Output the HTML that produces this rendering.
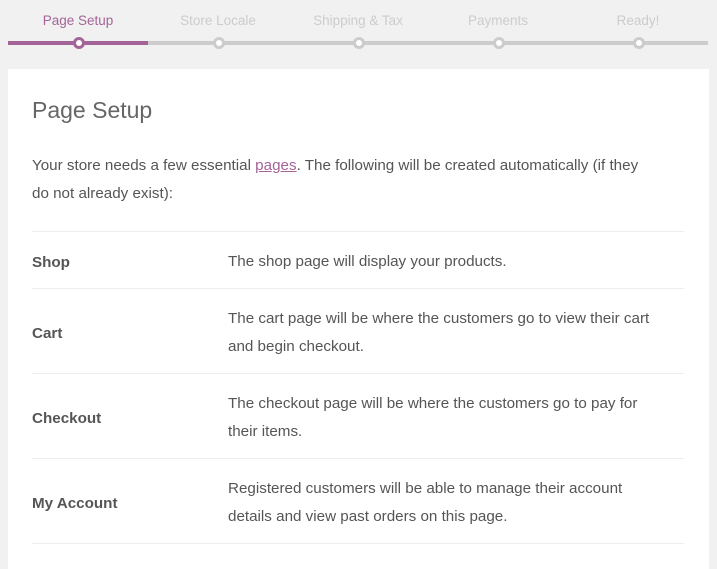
<!DOCTYPE html>
<html><head><meta charset="utf-8"><style>
body{margin:0;background:#f1f1f1;font-family:"Liberation Sans",sans-serif;color:#555;width:717px;height:552px;overflow:hidden;position:relative}
.steps{position:absolute;top:0;left:8px;width:700px;height:50px}
.step{position:absolute;top:0;width:140px;height:50px;text-align:center}
.step .lbl{position:absolute;top:13px;width:100%;font-size:13.5px;color:#ccc}
.step .bar{position:absolute;top:41px;left:0;width:140px;height:4px;background:#ccc}
.step .dot{position:absolute;top:37px;left:65px;width:6px;height:6px;border:3px solid #ccc;background:#fff;border-radius:50%}
.step.active .lbl{color:#a46497}
.step.active .bar{background:#a46497}
.step.active .dot{border-color:#a46497}
.card{position:absolute;top:69px;left:8px;width:701px;height:500px;background:#fff}
h1{position:absolute;top:97px;left:32px;margin:0;font-weight:normal;font-size:23px;color:#666}
.intro{position:absolute;top:152px;left:32px;width:625px;font-size:15.2px;line-height:28px;margin:0}
.intro a{color:#a46497;text-decoration:underline}
.row{position:absolute;left:32px;width:652px;border-top:1px solid #eee}
.row b{position:absolute;left:0;font-size:15.2px;color:#555}
.row span{position:absolute;left:196px;width:438px;font-size:15.2px;line-height:28px}
</style></head><body>
<div class="steps">
<div class="step active" style="left:0"><div class="lbl">Page Setup</div><div class="bar"></div><div class="dot"></div></div>
<div class="step" style="left:140px"><div class="lbl">Store Locale</div><div class="bar"></div><div class="dot"></div></div>
<div class="step" style="left:280px"><div class="lbl">Shipping &amp; Tax</div><div class="bar"></div><div class="dot"></div></div>
<div class="step" style="left:420px"><div class="lbl">Payments</div><div class="bar"></div><div class="dot"></div></div>
<div class="step" style="left:560px"><div class="lbl">Ready!</div><div class="bar"></div><div class="dot"></div></div>
</div>
<div class="card"></div>
<h1>Page Setup</h1>
<p class="intro">Your store needs a few essential <a>pages</a>. The following will be created automatically (if they do not already exist):</p>
<div class="row" style="top:231px;height:57px"><b style="top:22px">Shop</b><span style="top:16px">The shop page will display your products.</span></div>
<div class="row" style="top:288px;height:85px"><b style="top:36px">Cart</b><span style="top:16px">The cart page will be where the customers go to view their cart and begin checkout.</span></div>
<div class="row" style="top:373px;height:85px"><b style="top:36px">Checkout</b><span style="top:16px">The checkout page will be where the customers go to pay for their items.</span></div>
<div class="row" style="top:458px;height:85px"><b style="top:36px">My Account</b><span style="top:16px">Registered customers will be able to manage their account details and view past orders on this page.</span></div>
<div class="row" style="top:543px;height:9px"></div>
</body></html>
